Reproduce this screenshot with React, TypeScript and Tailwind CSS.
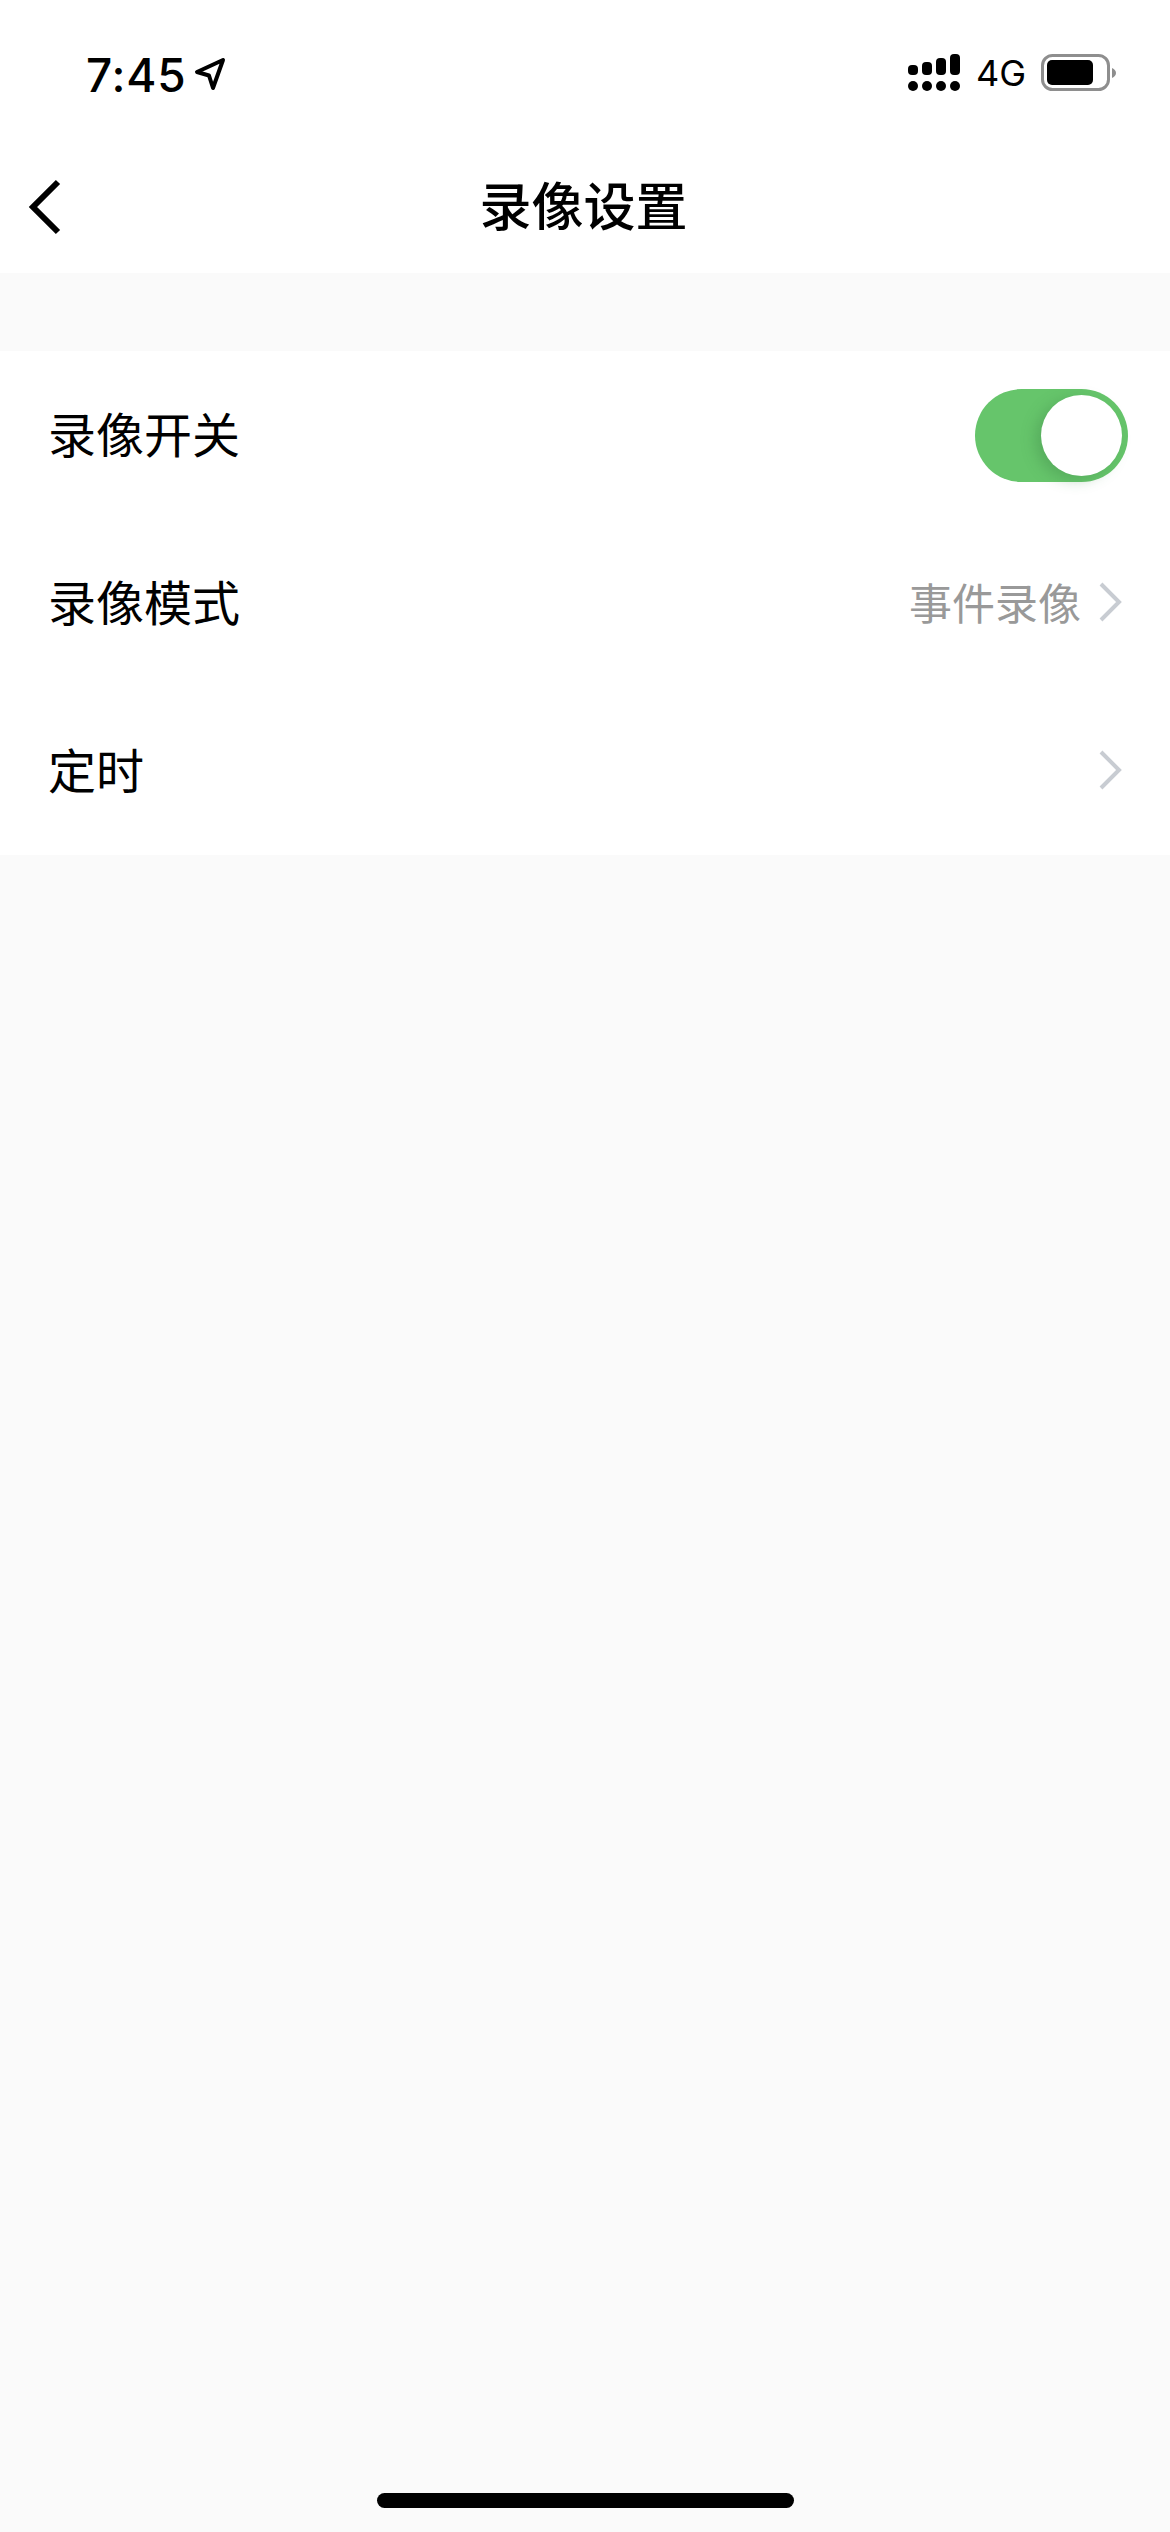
const cjk = "font-['Noto_Sans_CJK_SC','Liberation_Sans',sans-serif]";

const Chevron = () => (
  <svg width="24" height="40" viewBox="0 0 24 40" fill="none" className="mb-[2px] shrink-0">
    <polyline points="2,2 20,20 2,38" stroke="#c8ccd2" strokeWidth="4" />
  </svg>
);

const StatusBar = () => (
  <div className="flex h-[130px] items-start justify-between bg-white pl-[86px] pr-[53px] pt-[47px]">
    <div className="flex items-center gap-[7px]">
      <span className="font-['Inter',sans-serif] text-[46px] font-[550] leading-[56px] tracking-[0.8px] text-black">
        7:45
      </span>
      <svg width="32" height="34" viewBox="0 0 32 34" fill="none" className="mb-[2px]">
        <path
          d="M29 3 L3 15 L15 18.5 L19 31 Z"
          stroke="#000"
          strokeWidth="4"
          strokeLinejoin="round"
        />
      </svg>
    </div>
    <div className="flex items-center pt-[4px]">
      <svg width="52" height="38" viewBox="0 0 52 38" fill="#000">
        <rect x="0" y="11" width="10" height="10" rx="4" />
        <rect x="14" y="8" width="10" height="13" rx="4" />
        <rect x="28" y="4" width="10" height="17" rx="4" />
        <rect x="42" y="0" width="10" height="21" rx="4" />
        <circle cx="5" cy="32" r="5" />
        <circle cx="19" cy="32" r="5" />
        <circle cx="33" cy="32" r="5" />
        <circle cx="47" cy="32" r="5" />
      </svg>
      <span className="ml-[16px] font-['Inter',sans-serif] text-[36px] leading-[44px] text-black">4G</span>
      <svg width="76" height="38" viewBox="0 0 76 38" fill="none" className="ml-[15px]">
        <rect x="1.5" y="1.5" width="66" height="34" rx="10" stroke="#8e8e8e" strokeWidth="3" />
        <rect x="6" y="6" width="46" height="25" rx="5" fill="#000" />
        <path d="M71 14 Q75 16 75 19 Q75 22 71 24 Z" fill="#8e8e8e" />
      </svg>
    </div>
  </div>
);

const NavBar = () => (
  <div className="relative flex h-[143px] items-center justify-center bg-white pr-[3px] pt-[5px]">
    <svg
      width="34"
      height="58"
      viewBox="0 0 34 58"
      fill="none"
      className="absolute left-[28px] top-[48px]"
    >
      <polyline points="30,4 5,29 30,54" stroke="#000" strokeWidth="6" />
    </svg>
    <h1 className={`${cjk} text-[52px] font-medium leading-[64px] text-black`}>录像设置</h1>
  </div>
);

const Row = ({ label, children }: { label: string; children?: React.ReactNode }) => (
  <div className="flex h-[168px] items-center justify-between pl-[48px] pr-[47px]">
    <span className={`${cjk} pb-[6px] text-[48px] leading-[60px] text-black`}>{label}</span>
    {children}
  </div>
);

export default function App() {
  return (
    <div className="flex min-h-[2532px] flex-col bg-[#fafafa]">
      <StatusBar />
      <NavBar />
      <div className="mt-[78px] bg-white">
        <Row label="录像开关">
          <div className="-mr-[5px] flex h-[93px] w-[153px] items-center justify-end rounded-full bg-[#66c56b] pr-[6px]">
            <div className="h-[81px] w-[81px] rounded-full bg-white shadow-[-6px_4px_14px_rgba(60,130,70,0.35)]" />
          </div>
        </Row>
        <Row label="录像模式">
          <div className="flex items-center gap-[18px]">
            <span className={`${cjk} pb-[5px] text-[43px] leading-[52px] text-[#999999]`}>事件录像</span>
            <Chevron />
          </div>
        </Row>
        <Row label="定时">
          <Chevron />
        </Row>
      </div>
      <div className="mt-auto flex justify-center pb-[24px]">
        <div className="h-[15px] w-[417px] rounded-full bg-black" />
      </div>
    </div>
  );
}
